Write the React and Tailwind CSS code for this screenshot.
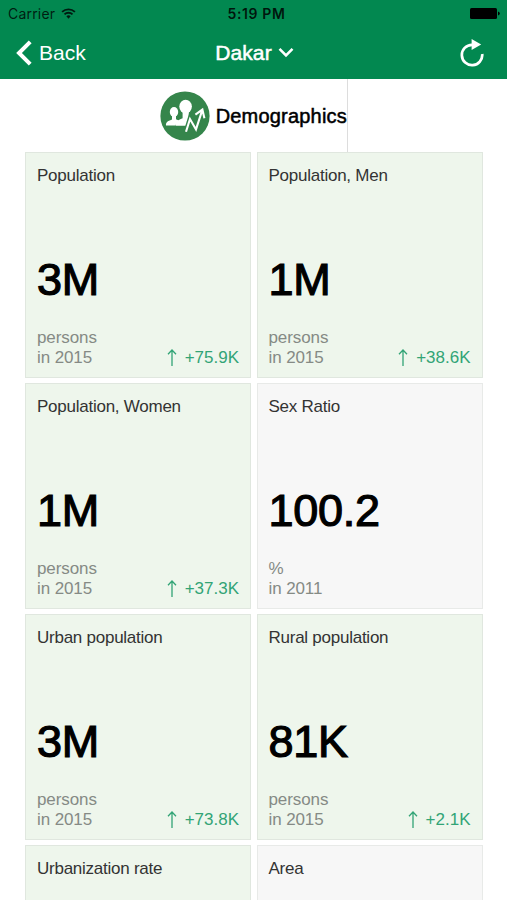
const indicators = [
  { label: "Population", value: "3M", unit: "persons", year: 2015, change: "+75.9K" },
  { label: "Population, Men", value: "1M", unit: "persons", year: 2015, change: "+38.6K" },
  { label: "Population, Women", value: "1M", unit: "persons", year: 2015, change: "+37.3K" },
  { label: "Sex Ratio", value: "100.2", unit: "%", year: 2011 },
  { label: "Urban population", value: "3M", unit: "persons", year: 2015, change: "+73.8K" },
  { label: "Rural population", value: "81K", unit: "persons", year: 2015, change: "+2.1K" },
  { label: "Urbanization rate", green: true },
  { label: "Area" },
];

function StatusBar() {
  return (
    <div className="grid h-[26px] grid-cols-3 items-center pl-2 pr-[7px] font-['Inter',sans-serif] text-[14px] leading-none text-black/80">
      <div className="flex items-center gap-[6px] pt-[2px]">
        <span className="tracking-[0.2px]">Carrier</span>
        <svg className="-mt-0.5" width="15" height="11" viewBox="0 0 16 12" fill="none" stroke="currentColor" strokeWidth="2">
          <path d="M1 4.3a10 10 0 0 1 14 0" />
          <path d="M3.6 7a6.2 6.2 0 0 1 8.8 0" />
          <path d="M8 11.6 5.7 9.1a3.3 3.3 0 0 1 4.6 0Z" fill="currentColor" stroke="none" />
        </svg>
      </div>
      <div className="whitespace-nowrap pl-[5px] pt-[2px] text-center font-semibold tracking-[0.6px] text-black/85">5:19 PM</div>
      <svg className="justify-self-end" width="30" height="13" viewBox="0 0 30 13" fill="black">
        <rect x="0" y="1" width="27" height="11" rx="1.5" />
        <path d="M28 4.5q1.8.5 1.8 2t-1.8 2Z" />
      </svg>
    </div>
  );
}

function NavBar() {
  return (
    <div className="grid h-[53px] grid-cols-3 items-center pl-[15px] pr-[23px] text-[21px] leading-none text-white">
      <div className="flex items-center gap-[6px]">
        <svg width="18" height="26" viewBox="0 0 18 26" fill="none" stroke="white" strokeWidth="4">
          <path d="M15.2 1.8 4 13l11.2 11.2" />
        </svg>
        <span>Back</span>
      </div>
      <div className="flex items-center justify-center gap-[6px] pl-[10px]">
        <span className="tracking-[0.1px] [-webkit-text-stroke:0.5px_white]">Dakar</span>
        <svg width="16" height="11" viewBox="0 0 16 11" fill="none" stroke="white" strokeWidth="2.6">
          <path d="m1.5 1.8 6.5 6.5 6.5-6.5" />
        </svg>
      </div>
      <svg className="justify-self-end" width="24" height="28" viewBox="0 0 24 28">
        <path d="M12 5.8A10.2 10.2 0 1 0 22.2 15" fill="none" stroke="white" strokeWidth="2.7" />
        <path d="M11.6 0 21.2 5.4 11.6 11Z" fill="white" />
      </svg>
    </div>
  );
}

function DemographicsIcon() {
  return (
    <svg width="50" height="50" viewBox="0 0 50 50">
      <circle cx="25" cy="25" r="24.6" fill="#35854b" />
      <g fill="white">
        <ellipse cx="14" cy="21" rx="4.2" ry="5" />
        <path d="M12 24h4v4.2l2.8 1.4-3.6 5H6c-.2-3.2 1.2-4.2 6-6Z" />
        <ellipse cx="25.6" cy="15.6" rx="6.3" ry="6.8" />
        <path d="M22.6 20h6.2v7.2l1 .6-3.4 6.9H15.6c-.2-4.1 1.8-5.2 7-7.4Z" />
      </g>
      <path d="m26 40.5 4-13.2 6 11L42 20" fill="none" stroke="#35854b" strokeWidth="4.6" />
      <path d="m26 40.8 4-12.8 6 10.4L42.3 19M35.4 23.6l7-5 2 8.6" fill="none" stroke="white" strokeWidth="2.1" />
    </svg>
  );
}

function Card({ label, value, unit, year, change, green }) {
  return (
    <div
      className={
        "flex h-[226px] flex-col border px-[11px] pt-3 " +
        (change || green ? "border-[#e0e7df] bg-[#eef6ec]" : "border-[#e8eae8] bg-[#f7f7f7]")
      }
    >
      <div className="text-[17px] leading-[22px] tracking-[-0.25px] text-[#333]">{label}</div>
      {value && (
        <>
          <div className="mt-[65px] text-[45px] leading-[56px] tracking-[-0.3px] text-black [-webkit-text-stroke:1.2px_black]">{value}</div>
          <div className="mt-[20px] flex items-end justify-between text-[17px] leading-5 tracking-[-0.1px] text-[#858a85]">
            <div>
              <div>{unit}</div>
              <div>in {year}</div>
            </div>
            {change && (
              <div className="flex items-center gap-2 tracking-normal text-[#32a476]">
                <svg className="-mt-0.5" width="10" height="17" viewBox="0 0 10 17" fill="none" stroke="currentColor" strokeWidth="1.3">
                  <path d="M5 17V1M1 5.2 5 1l4 4.2" />
                </svg>
                <span>{change}</span>
              </div>
            )}
          </div>
        </>
      )}
    </div>
  );
}

export default function App() {
  return (
    <div className="h-[900px] w-[507px] overflow-hidden bg-white font-['Liberation_Sans',Arial,sans-serif]">
      <header className="h-[79px] bg-[#028850]">
        <StatusBar />
        <NavBar />
      </header>
      <div className="flex h-[73px] w-[348px] items-center justify-end gap-[6px] border-r border-[#ddd]">
        <DemographicsIcon />
        <h1 className="text-[20px] leading-none tracking-[0.2px] text-black [-webkit-text-stroke:0.5px_black]">Demographics</h1>
      </div>
      <main className="ml-[25px] grid w-[457.5px] grid-cols-2 gap-x-[5.5px] gap-y-[5px]">
        {indicators.map((item) => (
          <Card key={item.label} {...item} />
        ))}
      </main>
    </div>
  );
}
